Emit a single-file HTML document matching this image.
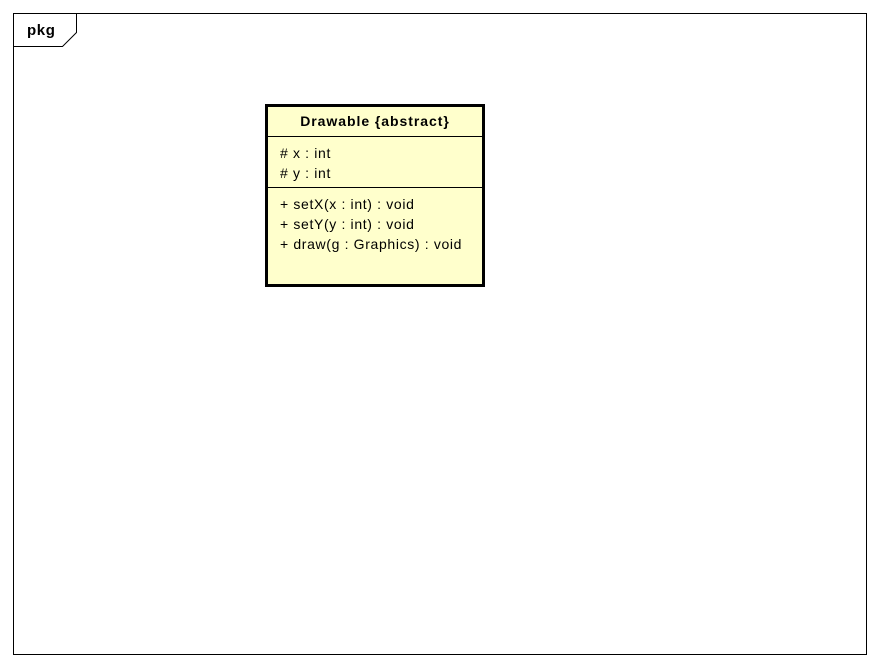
<!DOCTYPE html>
<html><head><style>
body{margin:0;width:880px;height:666px;background:#fff;position:relative;font-family:"Liberation Sans",sans-serif;overflow:hidden}
.t{position:absolute;font-size:14px;color:#000;white-space:nowrap;letter-spacing:0.65px}
</style></head><body>
<svg width="880" height="666" style="position:absolute;left:0;top:0">
<rect x="13.5" y="13.5" width="853" height="641" fill="none" stroke="#000" stroke-width="1"/>
<polyline points="13.5,46.5 62.5,46.5 76.5,32.5 76.5,13.5" fill="none" stroke="#000" stroke-width="1"/>
<rect x="266.5" y="105.5" width="217" height="180" fill="#ffffcc" stroke="#000" stroke-width="3"/>
<line x1="266" y1="136.5" x2="484" y2="136.5" stroke="#000" stroke-width="1"/>
<line x1="266" y1="187.5" x2="484" y2="187.5" stroke="#000" stroke-width="1"/>
</svg>
<div class="t" style="left:27px;top:22px;font-weight:bold;font-size:15px;letter-spacing:0.6px">pkg</div>
<div class="t" style="left:266px;width:218px;text-align:center;top:113px;font-weight:bold;letter-spacing:0.95px">Drawable {abstract}</div>
<div class="t" style="left:280px;top:145px"># x : int</div>
<div class="t" style="left:280px;top:165px"># y : int</div>
<div class="t" style="left:280px;top:196px">+ setX(x : int) : void</div>
<div class="t" style="left:280px;top:216px">+ setY(y : int) : void</div>
<div class="t" style="left:280px;top:236px">+ draw(g : Graphics) : void</div>
</body></html>
